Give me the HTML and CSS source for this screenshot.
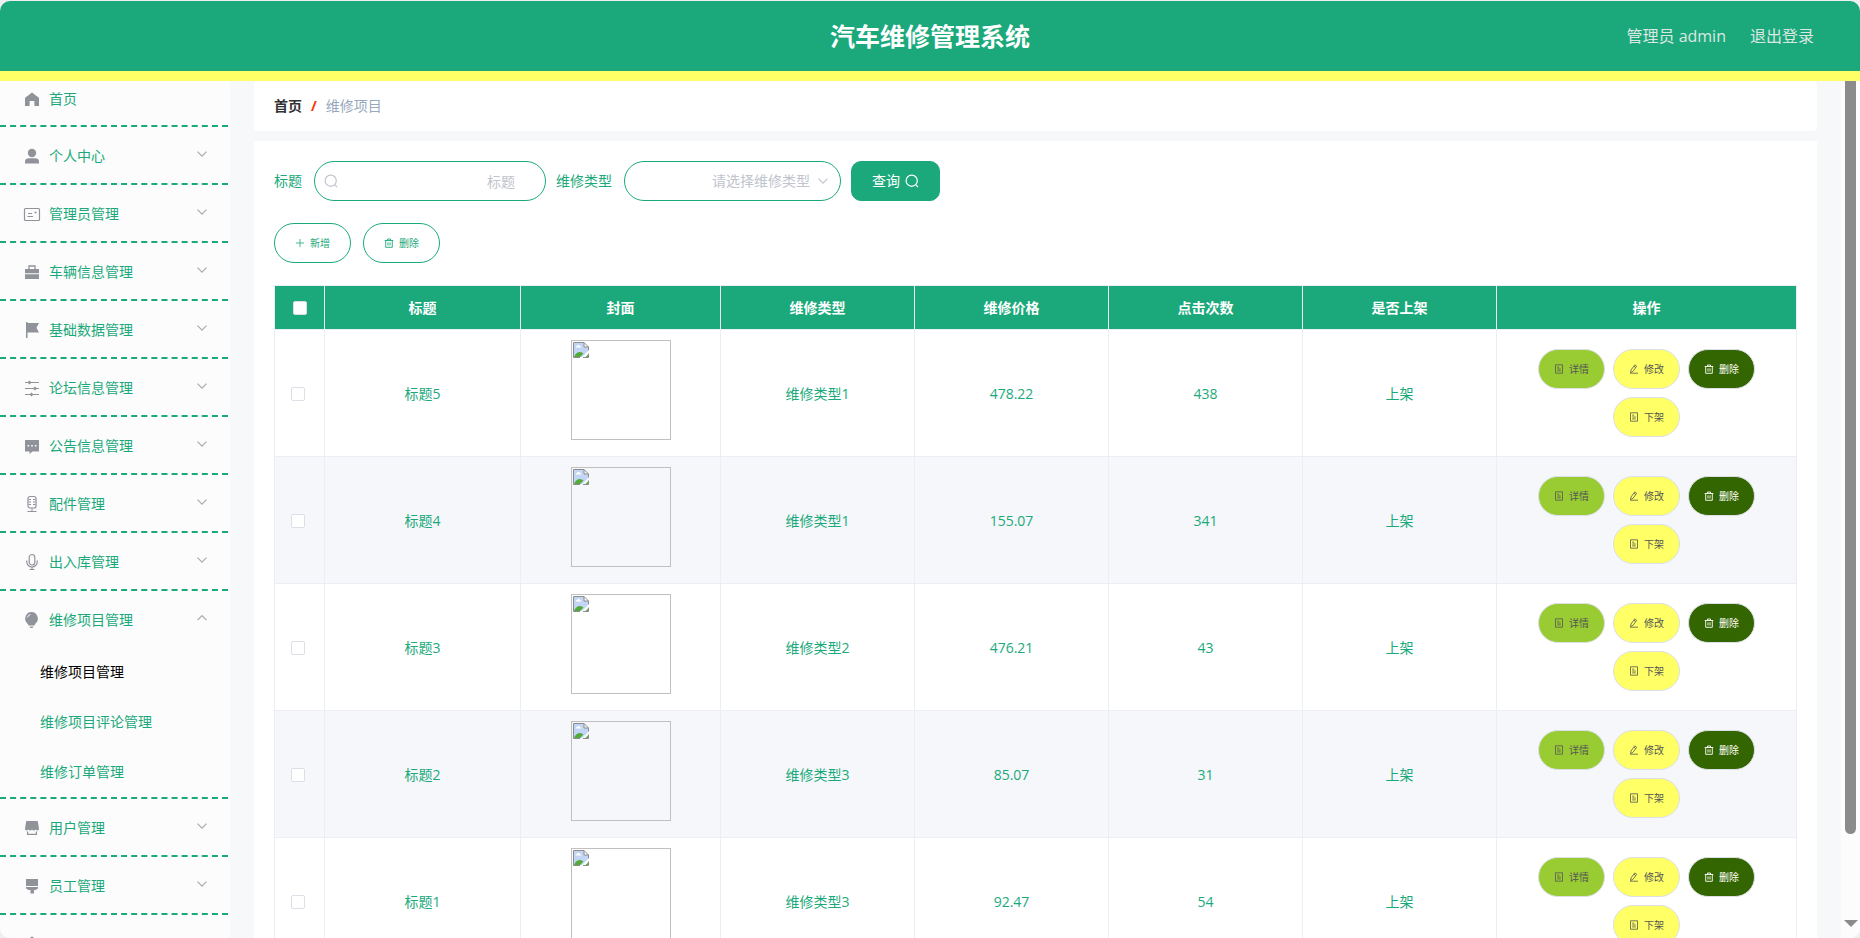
FILE: index.html
```html
<!DOCTYPE html>
<html lang="zh-CN">
<head>
<meta charset="utf-8">
<title>汽车维修管理系统</title>
<link rel="stylesheet" href="styles.css">
</head>
<body>
<svg class="sprite" aria-hidden="true">
  <symbol id="i-home" viewBox="0 0 18 18"><path fill="currentColor" d="M9 2.600 15.600 7.400Q16 7.700 16 8.300V16h-4.600v-5H6.600v5H2V8.300q0-.6.4-.9z"/></symbol>
  <symbol id="i-user" viewBox="0 0 18 18"><circle cx="9" cy="6" r="4.200" fill="currentColor"/><path fill="currentColor" d="M2 16.500v-1.500q0-3.700 3.700-3.700h6.600q3.700 0 3.700 3.700v1.500z"/></symbol>
  <symbol id="i-card" viewBox="0 0 18 18"><rect x="1.500" y="3.500" width="15" height="12" rx="1" fill="none" stroke="currentColor" stroke-width="1.200"/><path stroke="currentColor" fill="none" d="M5 8.500h4M4.500 11.500h5.500"/><path stroke="currentColor" stroke-width="1.600" fill="none" d="M11.500 7.500h2"/></symbol>
  <symbol id="i-case" viewBox="0 0 18 18"><path fill="none" stroke="currentColor" stroke-width="1.300" d="M6 7V3h6v4"/><path fill="currentColor" d="M2 6h14v4.200H2zM2 11.200h14V16H2z"/></symbol>
  <symbol id="i-flag" viewBox="0 0 18 18"><path fill="currentColor" d="M3 1h1.500v16H3zM4 2h12l-2.500 4.700L16 11.500H4z"/></symbol>
  <symbol id="i-sliders" viewBox="0 0 18 18"><path stroke="currentColor" stroke-width="1.200" fill="none" d="M2 3.500h14M2 9.500h14M2 15.500h14"/><path fill="currentColor" d="M4.500 3.500 6.500 1.500 8.500 3.500 6.500 5.500zM10 9.500l2-2 2 2-2 2zM6.500 15.500l2-2 2 2-2 2z"/></symbol>
  <symbol id="i-chat" viewBox="0 0 18 18"><path fill="currentColor" fill-rule="evenodd" d="M2 3h14v11.500H9.500L6.500 17v-2.500H2zM4.500 8v1.600h1.600V8zM8.200 8v1.600h1.600V8zM11.900 8v1.600h1.600V8z"/></symbol>
  <symbol id="i-micline" viewBox="0 0 18 18"><rect x="5" y="1.500" width="8" height="11.500" rx="2" fill="none" stroke="currentColor" stroke-width="1.200"/><path stroke="currentColor" fill="none" d="M5.500 4.500h2.500M5.500 7h2.500M5.500 9.500h2.500M10 4.500h2.500M10 7h2.500M10 9.500h2.500M9 13v3.500M4.500 16.500h9"/></symbol>
  <symbol id="i-mic" viewBox="0 0 18 18"><rect x="6.200" y="1.500" width="5.600" height="10.500" rx="2.800" fill="none" stroke="currentColor" stroke-width="1.200"/><path stroke="currentColor" stroke-width="1.200" fill="none" d="M3.800 7.500V9a5.200 5 0 0 0 10.400 0V7.500M9 14v2.500M6.500 16.500h5"/></symbol>
  <symbol id="i-bulb" viewBox="0 0 18 18"><path fill="currentColor" d="M8.500 1a6.500 6.500 0 0 1 4.300 11.200q-1 .8-1.300 2.300H5.500q-.3-1.500-1.300-2.300A6.500 6.500 0 0 1 8.500 1M6.500 15.500h4q-.3 1.500-2 1.500t-2-1.500"/><path fill="none" stroke="#fcfcfc" d="M4.300 6.500q.8-2.500 3.200-3"/></symbol>
  <symbol id="i-shop" viewBox="0 0 18 18"><path fill="currentColor" d="M3.300 2h11.400L16 9.500q0 2-1.500 2-1.200 0-1.800-1-.7 1-1.900 1T9 10.500q-.6 1-1.800 1t-1.900-1q-.6 1-1.800 1-1.500 0-1.500-2z"/><path fill="none" stroke="currentColor" stroke-width="1.300" d="M4.600 12.500v2.800h8.800v-2.800"/></symbol>
  <symbol id="i-brush" viewBox="0 0 18 18"><path fill="currentColor" d="M3 2h12v7H3zM3 10h12v1.500L12.500 13H11v3.500H7.500V13h-2L3 11.500z"/></symbol>
  <symbol id="i-bell" viewBox="0 0 18 18"><path fill="currentColor" d="M9 1.500q1.500 0 1.500 1.500Q14 4 14 8.500V14H4V8.500Q4 4 7.500 3 7.500 1.500 9 1.500M2.500 14.500h13v1.300h-13z"/></symbol>
  <symbol id="i-down" viewBox="0 0 12 12"><path fill="none" stroke="currentColor" stroke-width="1.200" d="M1.500 3.700 6 8.200l4.500-4.500"/></symbol>
  <symbol id="i-up" viewBox="0 0 12 12"><path fill="none" stroke="currentColor" stroke-width="1.200" d="M1.500 8.200 6 3.700l4.500 4.500"/></symbol>
  <symbol id="i-search" viewBox="0 0 14 14"><circle cx="6.700" cy="6.700" r="5.600" fill="none" stroke="currentColor" stroke-width="1.200"/><path fill="none" stroke="currentColor" stroke-width="1.200" d="m10.600 10.600 2.400 2.400"/></symbol>
  <symbol id="i-plus" viewBox="0 0 10 10"><path fill="none" stroke="currentColor" stroke-width=".8" d="M1 5h8M5 1v8"/></symbol>
  <symbol id="i-trash" viewBox="0 0 10 10"><path fill="none" stroke="currentColor" stroke-width=".9" d="M.7 2.500h8.600M3.500 2.500V1h3v1.500M1.700 2.500v6.800h6.600V2.500M4 4.300v3.200M6 4.300v3.200"/></symbol>
  <symbol id="i-doc" viewBox="0 0 10 10"><path fill="none" stroke="currentColor" stroke-width=".8" d="M1.500.8h7v8.400h-7zM3.200 3.200h2M3.200 5h3.600M3.200 6.900h3.600"/></symbol>
  <symbol id="i-edit" viewBox="0 0 10 10"><path fill="none" stroke="currentColor" stroke-width=".8" d="M1.500 8.500 2 6 5.800.9l1.900 1.400L3.900 7.400zM4.900 2.200l1.800 1.400M1 9.200h8"/></symbol>
  <symbol id="i-broken" viewBox="0 0 16 16"><path fill="#c3d5f4" d="M1 1h10v4h4v4L9 15H1z"/><path fill="#fff" d="M2.500 5.500q0-1.500 1.500-1.500.5-1.500 2-1t1.500 1.500q1 0 1 1z"/><path fill="#53a93a" d="M1 15q2-5 6-5 2 0 3.500 1.500L7 15zM12.500 15 15 12.500V15z"/><path fill="none" stroke="#8c8c8c" d="M7 15.500H.5V.5h10.500l4.500 4.500V8.500M11 .5v4.500h4.500M10 15.500h5.500v-4"/></symbol>
</svg>

<header class="topbar">
  <h1 class="topbar-title">汽车维修管理系统</h1>
  <div class="topbar-user">
    <span>管理员 admin</span>
    <a class="topbar-link" href="#logout">退出登录</a>
  </div>
</header>

<div class="layout">
  <nav class="sidebar" aria-label="主菜单">
    <ul class="menu">
      <li class="menu-group"><a class="menu-item menu-item-first" href="#home"><svg class="menu-icon"><use href="#i-home"/></svg>首页</a></li>
      <li class="menu-group"><button class="menu-item"><svg class="menu-icon"><use href="#i-user"/></svg>个人中心<svg class="menu-arrow"><use href="#i-down"/></svg></button></li>
      <li class="menu-group"><button class="menu-item"><svg class="menu-icon"><use href="#i-card"/></svg>管理员管理<svg class="menu-arrow"><use href="#i-down"/></svg></button></li>
      <li class="menu-group"><button class="menu-item"><svg class="menu-icon"><use href="#i-case"/></svg>车辆信息管理<svg class="menu-arrow"><use href="#i-down"/></svg></button></li>
      <li class="menu-group"><button class="menu-item"><svg class="menu-icon"><use href="#i-flag"/></svg>基础数据管理<svg class="menu-arrow"><use href="#i-down"/></svg></button></li>
      <li class="menu-group"><button class="menu-item"><svg class="menu-icon"><use href="#i-sliders"/></svg>论坛信息管理<svg class="menu-arrow"><use href="#i-down"/></svg></button></li>
      <li class="menu-group"><button class="menu-item"><svg class="menu-icon"><use href="#i-chat"/></svg>公告信息管理<svg class="menu-arrow"><use href="#i-down"/></svg></button></li>
      <li class="menu-group"><button class="menu-item"><svg class="menu-icon"><use href="#i-micline"/></svg>配件管理<svg class="menu-arrow"><use href="#i-down"/></svg></button></li>
      <li class="menu-group"><button class="menu-item"><svg class="menu-icon"><use href="#i-mic"/></svg>出入库管理<svg class="menu-arrow"><use href="#i-down"/></svg></button></li>
      <li class="menu-group"><button class="menu-item" aria-expanded="true"><svg class="menu-icon"><use href="#i-bulb"/></svg>维修项目管理<svg class="menu-arrow"><use href="#i-up"/></svg></button>
        <ul class="menu">
          <li><a class="submenu-item submenu-item-active" href="#project">维修项目管理</a></li>
          <li><a class="submenu-item" href="#comments">维修项目评论管理</a></li>
          <li><a class="submenu-item" href="#orders">维修订单管理</a></li>
        </ul>
      </li>
      <li class="menu-group"><button class="menu-item"><svg class="menu-icon"><use href="#i-shop"/></svg>用户管理<svg class="menu-arrow"><use href="#i-down"/></svg></button></li>
      <li class="menu-group"><button class="menu-item"><svg class="menu-icon"><use href="#i-brush"/></svg>员工管理<svg class="menu-arrow"><use href="#i-down"/></svg></button></li>
      <li class="menu-group"><button class="menu-item" aria-label="更多"><svg class="menu-icon"><use href="#i-bell"/></svg></button></li>
    </ul>
  </nav>

  <main class="content">
    <nav class="breadcrumb" aria-label="面包屑">
      <a class="breadcrumb-home" href="#home">首页</a>
      <span class="breadcrumb-sep">/</span>
      <span class="breadcrumb-current">维修项目</span>
    </nav>

    <section class="panel">
      <form class="search">
        <label class="search-label" for="title">标题</label>
        <div class="field field-input">
          <svg class="field-search"><use href="#i-search"/></svg>
          <input class="control" id="title" type="text" placeholder="标题">
        </div>
        <label class="search-label" for="type">维修类型</label>
        <div class="field field-select">
          <select class="control" id="type"><option>请选择维修类型</option></select>
          <svg class="field-arrow"><use href="#i-down"/></svg>
        </div>
        <button class="btn-query" type="button">查询<svg class="icon-query"><use href="#i-search"/></svg></button>
      </form>

      <div class="toolbar">
        <button class="btn btn-outline"><svg class="icon-small"><use href="#i-plus"/></svg>新增</button>
        <button class="btn btn-outline"><svg class="icon-small"><use href="#i-trash"/></svg>删除</button>
      </div>

      <table class="grid">
        <colgroup><col class="col-check"><col class="col-title"><col class="col-cover"><col><col><col><col><col class="col-actions"></colgroup>
        <thead>
          <tr><th class="cell-check"><input class="check" type="checkbox" aria-label="全选"></th><th>标题</th><th>封面</th><th>维修类型</th><th>维修价格</th><th>点击次数</th><th>是否上架</th><th>操作</th></tr>
        </thead>
        <tbody>
          <tr><td class="cell-check"><input class="check" type="checkbox" aria-label="选择标题5"></td><td>标题5</td><td class="cell-cover"><div class="cover"><svg class="cover-icon"><use href="#i-broken"/></svg></div></td><td>维修类型1</td><td>478.22</td><td>438</td><td>上架</td>
            <td class="cell-actions"><div class="actions"><button class="btn btn-detail"><svg class="icon-small"><use href="#i-doc"/></svg>详情</button><button class="btn btn-edit"><svg class="icon-small"><use href="#i-edit"/></svg>修改</button><button class="btn btn-delete"><svg class="icon-small"><use href="#i-trash"/></svg>删除</button><button class="btn btn-edit"><svg class="icon-small"><use href="#i-doc"/></svg>下架</button></div></td></tr>
          <tr><td class="cell-check"><input class="check" type="checkbox" aria-label="选择标题4"></td><td>标题4</td><td class="cell-cover"><div class="cover"><svg class="cover-icon"><use href="#i-broken"/></svg></div></td><td>维修类型1</td><td>155.07</td><td>341</td><td>上架</td>
            <td class="cell-actions"><div class="actions"><button class="btn btn-detail"><svg class="icon-small"><use href="#i-doc"/></svg>详情</button><button class="btn btn-edit"><svg class="icon-small"><use href="#i-edit"/></svg>修改</button><button class="btn btn-delete"><svg class="icon-small"><use href="#i-trash"/></svg>删除</button><button class="btn btn-edit"><svg class="icon-small"><use href="#i-doc"/></svg>下架</button></div></td></tr>
          <tr><td class="cell-check"><input class="check" type="checkbox" aria-label="选择标题3"></td><td>标题3</td><td class="cell-cover"><div class="cover"><svg class="cover-icon"><use href="#i-broken"/></svg></div></td><td>维修类型2</td><td>476.21</td><td>43</td><td>上架</td>
            <td class="cell-actions"><div class="actions"><button class="btn btn-detail"><svg class="icon-small"><use href="#i-doc"/></svg>详情</button><button class="btn btn-edit"><svg class="icon-small"><use href="#i-edit"/></svg>修改</button><button class="btn btn-delete"><svg class="icon-small"><use href="#i-trash"/></svg>删除</button><button class="btn btn-edit"><svg class="icon-small"><use href="#i-doc"/></svg>下架</button></div></td></tr>
          <tr><td class="cell-check"><input class="check" type="checkbox" aria-label="选择标题2"></td><td>标题2</td><td class="cell-cover"><div class="cover"><svg class="cover-icon"><use href="#i-broken"/></svg></div></td><td>维修类型3</td><td>85.07</td><td>31</td><td>上架</td>
            <td class="cell-actions"><div class="actions"><button class="btn btn-detail"><svg class="icon-small"><use href="#i-doc"/></svg>详情</button><button class="btn btn-edit"><svg class="icon-small"><use href="#i-edit"/></svg>修改</button><button class="btn btn-delete"><svg class="icon-small"><use href="#i-trash"/></svg>删除</button><button class="btn btn-edit"><svg class="icon-small"><use href="#i-doc"/></svg>下架</button></div></td></tr>
          <tr><td class="cell-check"><input class="check" type="checkbox" aria-label="选择标题1"></td><td>标题1</td><td class="cell-cover"><div class="cover"><svg class="cover-icon"><use href="#i-broken"/></svg></div></td><td>维修类型3</td><td>92.47</td><td>54</td><td>上架</td>
            <td class="cell-actions"><div class="actions"><button class="btn btn-detail"><svg class="icon-small"><use href="#i-doc"/></svg>详情</button><button class="btn btn-edit"><svg class="icon-small"><use href="#i-edit"/></svg>修改</button><button class="btn btn-delete"><svg class="icon-small"><use href="#i-trash"/></svg>删除</button><button class="btn btn-edit"><svg class="icon-small"><use href="#i-doc"/></svg>下架</button></div></td></tr>
        </tbody>
      </table>
    </section>
  </main>

  <div class="scrollbar" aria-hidden="true">
    <div class="scrollbar-thumb"></div>
    <div class="scrollbar-down"></div>
  </div>
</div>
</body>
</html>
```
FILE: styles.css
```css
:root {
  --green: #1ba97b;
  --yellow: #ffff66;
  --line: #ebeef5;
}

* {
  box-sizing: border-box;
}

html {
  background: #eef0f0;
}

body {
  display: flex;
  flex-direction: column;
  height: 100vh;
  margin: 0;
  padding-top: 1px;
  overflow: hidden;
  color: var(--green);
  font: 14px/20px "Open Sans", "Noto Sans CJK SC", sans-serif;
}

button,
input,
select {
  font: inherit;
}

button {
  cursor: pointer;
}

a {
  color: inherit;
  text-decoration: none;
}

.sprite {
  display: none;
}

/* Top bar */
.topbar {
  display: grid;
  flex: none;
  grid-template-columns: 1fr auto 1fr;
  align-items: center;
  height: 80px;
  padding: 0 46px;
  border-bottom: 10px solid var(--yellow);
  border-radius: 10px 10px 0 0;
  background: var(--green);
}

.topbar-title {
  grid-column: 2;
  margin: 0;
  color: #fff;
  font-size: 25px;
  line-height: 36px;
}

.topbar-user {
  display: flex;
  justify-content: flex-end;
  gap: 24px;
  color: #dde6e2;
  font-size: 16px;
}

/* Page body */
.layout {
  display: flex;
  flex: 1;
  min-height: 0;
  overflow: hidden;
  border-radius: 0 0 10px 10px;
  background: #f6f8fa;
}

.sidebar {
  flex: none;
  width: 230px;
  padding-right: 2px;
  overflow: hidden;
  background: #fcfcfc;
}

.menu {
  margin: 0;
  padding: 0;
  list-style: none;
}

.menu-group {
  border-bottom: 2px dashed var(--green);
}

.menu-item {
  display: flex;
  align-items: center;
  width: 100%;
  height: 56px;
  padding: 2px 20px 0 23px;
  border: 0;
  background: none;
  color: inherit;
  text-align: left;
}

.menu-item-first {
  height: 44px;
  padding-bottom: 10px;
}

.menu-icon {
  flex: none;
  width: 18px;
  height: 18px;
  margin-right: 8px;
  color: #909399;
}

.menu-arrow {
  width: 12px;
  height: 12px;
  margin: 0 0 4px auto;
  color: #aaa;
}

.submenu-item {
  display: block;
  padding-left: 40px;
  line-height: 50px;
}

.submenu-item-active {
  color: #000;
}

.content {
  display: flex;
  flex: 1;
  flex-direction: column;
  gap: 10px;
  min-width: 0;
  padding: 0 24px;
  overflow: hidden;
}

.breadcrumb {
  display: flex;
  flex: none;
  align-items: center;
  gap: 9px;
  height: 50px;
  padding: 0 20px;
  border-radius: 4px;
  background: #fff;
}

.breadcrumb-home {
  color: #303133;
  font-weight: 700;
}

.breadcrumb-sep {
  color: #ff3300;
  font-weight: 700;
}

.breadcrumb-current {
  color: #97a8be;
}

.panel {
  flex: none;
  padding: 20px;
  background: #fff;
}

/* Search form */
.search {
  display: flex;
  align-items: center;
  gap: 10px;
  margin-bottom: 22px;
}

.field {
  position: relative;
  height: 40px;
  margin-left: 2px;
}

.field-input {
  width: 232px;
}

.field-select {
  width: 217px;
}

.control {
  width: 100%;
  height: 40px;
  padding: 0 30px;
  border: 1px solid var(--green);
  border-radius: 20px;
  outline: 0;
  appearance: none;
  background: #fff;
  color: #c0c4cc;
  text-align: right;
  text-align-last: right;
}

.control::placeholder {
  color: #c0c4cc;
}

.field-search {
  position: absolute;
  top: 13px;
  left: 10px;
  width: 14px;
  height: 14px;
  color: #c0c4cc;
}

.field-arrow {
  position: absolute;
  top: 14px;
  right: 12px;
  width: 12px;
  height: 12px;
  color: #c0c4cc;
}

.btn-query {
  display: flex;
  align-items: center;
  gap: 5px;
  height: 40px;
  padding: 0 20px;
  border: 1px solid var(--green);
  border-radius: 10px;
  background: var(--green);
  color: #fff;
}

.icon-query {
  width: 14px;
  height: 14px;
}

.toolbar {
  display: flex;
  gap: 12px;
  margin-bottom: 22px;
}

.btn {
  display: flex;
  align-items: center;
  gap: 5px;
  height: 40px;
  padding: 0 15px;
  border: 1px solid #dcdfe6;
  border-radius: 20px;
  color: #555;
  font-size: 10px;
}

.icon-small {
  width: 10px;
  height: 10px;
}

.btn-outline {
  padding: 0 20px;
  border-color: var(--green);
  background: #fff;
  color: var(--green);
}

.btn-detail {
  background: #99cc33;
}

.btn-edit {
  background: var(--yellow);
}

.btn-delete {
  background: #336600;
  color: #fff;
}

/* Data table */
.grid {
  width: 100%;
  border-collapse: collapse;
  table-layout: fixed;
  text-align: center;
}

.grid th,
.grid td {
  padding: 0 10px;
  border: 1px solid var(--line);
}

.grid th {
  height: 44px;
  background: var(--green);
  color: #fff;
}

.grid td {
  height: 127px;
  padding-top: 2px;
}

.grid tbody tr:nth-child(even) {
  background: #f5f7fa;
}

.col-check {
  width: 50px;
}

.col-title {
  width: 196px;
}

.col-cover {
  width: 200px;
}

.col-actions {
  width: 300px;
}

.grid .cell-check {
  padding: 2px 0 0 16px;
  text-align: left;
}

.grid th.cell-check {
  padding: 0 0 0 18px;
}

.check {
  display: block;
  width: 14px;
  height: 14px;
  margin: 0;
  border: 1px solid #dcdfe6;
  border-radius: 2px;
  appearance: none;
  background: #fff;
}

.grid .cell-cover {
  padding: 0 10px 6px;
}

.grid .cell-actions {
  padding-top: 0;
}

.cover {
  width: 100px;
  height: 100px;
  margin: 0 auto;
  padding: 1px;
  border: 1px solid #c0c0c0;
}

.cover-icon {
  display: block;
  width: 16px;
  height: 16px;
}

.actions {
  display: flex;
  flex-wrap: wrap;
  justify-content: center;
  gap: 8px;
}

/* Scroll bar */
.scrollbar {
  display: flex;
  flex: none;
  flex-direction: column;
  align-items: center;
  justify-content: space-between;
  width: 19px;
  padding-bottom: 11px;
  background: #fcfcfc;
}

.scrollbar-thumb {
  width: 11px;
  height: 89%;
  border-radius: 0 0 6px 6px;
  background: #8b8b8b;
}

.scrollbar-down {
  border: 7px solid transparent;
  border-top-color: #8b8b8b;
  border-bottom: 0;
}
```
